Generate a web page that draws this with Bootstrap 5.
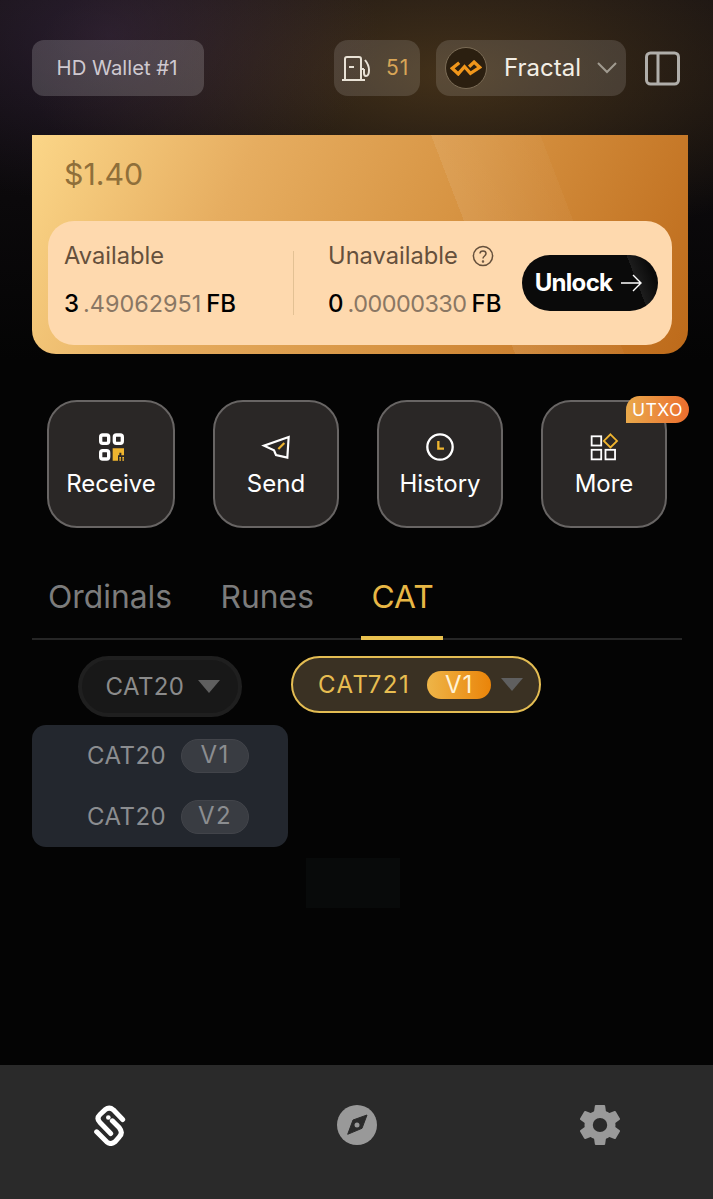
<!doctype html>
<html lang="en">
<head>
<meta charset="utf-8">
<title>Wallet</title>
<link rel="stylesheet" href="https://cdn.jsdelivr.net/npm/bootstrap@5.3.0/dist/css/bootstrap.min.css">
<style>
html,body{height:100%}
body{background:#040404;font-family:Inter,"Liberation Sans",sans-serif;color:#fff;overflow:hidden}
.app-shell{height:1199px;background:
 radial-gradient(ellipse 270px 170px at 110px 35px,rgba(70,48,85,.42),transparent 100%),
 radial-gradient(ellipse 420px 175px at 450px 75px,rgba(100,72,32,.6),transparent 100%),
 linear-gradient(#141012,#0b090b 200px,#040404 360px 100%)}
.top-bar{padding:40px 33px 39px 32px}
.chip{height:56px;border-radius:12px;background:rgba(255,255,255,.13)}
.wallet-chip{width:172px;font-size:20.3px;color:#cfc9d0;background:rgba(255,255,255,.17);padding-right:2px}
.gas-chip{width:86px;border-radius:14px;font-size:21px;letter-spacing:1px;color:#d8a557;gap:16px;padding-left:8px;margin-right:16px}
.net-chip{width:190px;border-radius:14px;padding:0 9px 0 9px;font-size:24px;color:#f3eee5;margin-right:19px}
.net-logo{width:42px;height:42px;border-radius:50%;background:#2b1f10;border:1px solid #7b6c56;margin-right:17px}
.hero{margin:0 25px 0 32px;height:219px;border-radius:0 0 24px 24px;padding:0 16px 9px;background:
 linear-gradient(69deg,transparent 451px,rgba(255,255,255,.08) 451px,rgba(255,255,255,.03) 553px,rgba(255,255,255,0) 553px),
 linear-gradient(115deg,#fbd688 0,#e6ad60 30%,#d79443 60%,#bd6a1a 100%)}
.usd{font-size:30.300px;color:#8f6f3a;padding:21px 0 0 16px;line-height:36px;height:86px}
.balance-box{height:124px;background:#fed9ae;border-radius:26px;padding:0 14px 0 16px;color:#000}
.bal-first{width:229px;margin-bottom:6px}
.bal-second{width:228px;padding-left:34px;flex-shrink:0;margin-bottom:6px}
.bal-rule{width:1px;height:64px;background:#e3c194}
.bal-label{font-size:23.700px;color:#65503c;line-height:28px;margin-bottom:19px;white-space:nowrap}
.bal-val{font-size:24px;line-height:30px;font-weight:500;white-space:nowrap}
.bal-val i{font-style:normal;font-size:23.400px;font-weight:400;color:#8a7764;margin:0 5px 0 4px}
.bal-second .bal-val i{letter-spacing:-.5px}
.bal-val b{font-weight:500;font-size:24px}
.unlock-btn{width:136px;height:56px;border-radius:28px;background:linear-gradient(69deg,#0a0a0a 80%,#1d1d1d 80%,#0a0a0a 92%);color:#fff;font-size:24px;font-weight:700;border:0;padding:0 3px 0 0;letter-spacing:-.7px}
.actions{padding:46px 0 0 47px;gap:38px}
.act-btn{width:126px;height:128px;border-radius:30px;background:#2a2726;border:2px solid #686564;color:#fff;font-size:24px;padding:3px 0 0;line-height:30px;gap:8px;flex-shrink:0}
.act-wide{width:128px}
.utxo-tag{right:-24px;top:-6px;width:63px;height:27px;font-size:17.600px;line-height:27px;letter-spacing:.4px;border-radius:14px 14px 14px 0;background:linear-gradient(90deg,#e9a94b,#ec6e2e);text-align:center;color:#fff}
.tab-row{margin:36px 31px 0 32px;border-bottom:2px solid #262626;height:76px;padding-left:16px;gap:48.500px}
.tab-item{font-size:31.800px;line-height:66px;color:#7c7c7c;height:76px;white-space:nowrap}
.tab-on{color:#e8b745;position:relative;padding:0 9px 0 10px;margin-left:-1px}
.tab-on::after{content:"";position:absolute;left:0;right:0;bottom:0;height:4px;background:#e9c14f}
.filter-row{padding:16px 0 0 78px;height:85px}
.cat-pill{height:61px;width:164px;border-radius:31px;background:#181818;border:4px solid #1f1f1f;color:#8b8b8b;font-size:24px;letter-spacing:.4px;gap:14px;padding-left:6px}
.cat-pill-on{height:57px;width:250px;margin-left:49px;border-radius:29px;background:#3a3123;border:2px solid #e4bd53;color:#e7bd51;font-size:24px;letter-spacing:1.500px;padding-left:25px}
.ver-on{width:64px;height:28px;line-height:28px;margin:0 10px 0 17px;border-radius:14px;background:linear-gradient(90deg,#eeb548,#ea8409);color:#fff3d6;text-align:center;letter-spacing:1px}
.tri{width:0;height:0;border-left:11px solid transparent;border-right:11px solid transparent;border-top:13px solid #5f5f5f}
.cat-menu{margin-left:32px;width:256px;height:122px;border-radius:14px;background:#23272e;padding:0 0 0 55px;color:#8b8d90;font-size:24px;letter-spacing:.45px;justify-content:space-around}
.ver-tag{width:68px;height:34px;line-height:30px;border:1px solid #42444a;border-radius:17px;background:#393c42;text-align:center;margin-left:15px;letter-spacing:1.500px}
.ghost{width:94px;height:50px;margin:11px 0 0 306px;background:#080a0a}
.bottom-bar{height:134px;background:#2a2a2a;padding:0 0 14px 94px}
.nav-mid{margin-left:211px}
.nav-end{margin-left:203px}
</style>
</head>
<body>
<div class="app-shell d-flex flex-column">
  <header class="top-bar d-flex align-items-center">
    <div class="chip wallet-chip d-flex align-items-center justify-content-center">HD Wallet #1</div>
    <div class="chip gas-chip d-flex align-items-center ms-auto">
      <svg width="28" height="25" viewBox="0 0 28 25" fill="none" stroke="#e9e2d6" stroke-width="2"><path d="M3 23V3q0-2 2-2h12q2 0 2 2v20M0 24h23M7 11h5"/><path d="M19 13h3M23 4q4 5 4 10 0 6-3 6-2 0-2-3v-4"/></svg>
      <span>51</span>
    </div>
    <div class="chip net-chip d-flex align-items-center">
      <div class="net-logo d-flex align-items-center justify-content-center">
        <svg width="32" height="16" viewBox="30 50 97 48" fill="none" stroke="#f0961b" stroke-width="10"><path d="M58 58 37 75 55 92 74 70 92 90 120 72 103 56 88 70"/></svg>
      </div>
      <span>Fractal</span>
      <svg class="ms-auto" width="20" height="12" viewBox="0 0 20 12" fill="none" stroke="#a19b90" stroke-width="2"><path d="m1 1 9 9 9-9"/></svg>
    </div>
    <svg width="35" height="35" viewBox="0 0 35 35" fill="none" stroke="#b0aeaa" stroke-width="3"><rect x="1.500" y="2" width="32" height="31" rx="4"/><path d="M13 2v31"/></svg>
  </header>

  <section class="hero">
    <div class="usd">$1.40</div>
    <div class="balance-box d-flex align-items-center">
      <div class="bal-first">
        <div class="bal-label">Available</div>
        <div class="bal-val">3<i>.49062951</i><b>FB</b></div>
      </div>
      <div class="bal-rule"></div>
      <div class="bal-second">
        <div class="bal-label d-flex align-items-center">Unavailable
          <svg class="flex-shrink-0" style="margin-left:14px" width="22" height="22" viewBox="0 0 22 22" fill="none" stroke="#65503c" stroke-width="1.500"><circle cx="11" cy="11" r="9.600"/><path d="M8 8.600C8 5 14 5 14 8.600c0 2.400-3 2.400-3 5"/><circle cx="11" cy="16.500" r=".5"/></svg>
        </div>
        <div class="bal-val">0<i>.00000330</i><b>FB</b></div>
      </div>
      <button class="unlock-btn btn d-flex align-items-center justify-content-center gap-2 flex-shrink-0">Unlock
        <svg width="22" height="18" viewBox="0 0 22 18" fill="none" stroke="#fff" stroke-width="1.400"><path d="M1 9h20M13 1l8 8-8 8"/></svg>
      </button>
    </div>
  </section>

  <nav class="actions d-flex">
    <button class="act-btn act-wide btn d-flex flex-column align-items-center justify-content-center">
      <svg width="25" height="28" viewBox="236 143 75 82"><g fill="none" stroke="#fff" stroke-width="10"><rect x="241" y="148" width="24" height="25" rx="6"/><rect x="282" y="148" width="24" height="25" rx="6"/><rect x="241" y="195" width="24" height="25" rx="6"/></g><path d="M277 188h34v21h-8v-8h-6v8h-4v16h-16z" fill="#efb52f"/><path d="M297 214h5v5h-5zM306 214h5v5h-5zM306 221h5v4h-5zM297 221h5v4h-5z" fill="#efb52f"/></svg>
      <span>Receive</span>
    </button>
    <button class="act-btn btn d-flex flex-column align-items-center justify-content-center">
      <svg width="32" height="28" viewBox="720 142 96 80" fill="none" stroke="#fff" stroke-width="6.500" stroke-linejoin="miter"><path d="M806 152 732 178 762 192 768 206 802 214Z"/><path d="M775 188 793 170" stroke="#efb52f"/></svg>
      <span>Send</span>
    </button>
    <button class="act-btn btn d-flex flex-column align-items-center justify-content-center">
      <svg width="28" height="28" viewBox="198 141 84 84" fill="none"><circle cx="240" cy="183" r="38" stroke="#fff" stroke-width="7"/><path d="M235 165v23h17" stroke="#efb52f" stroke-width="7"/></svg>
      <span>History</span>
    </button>
    <button class="act-btn btn d-flex flex-column align-items-center justify-content-center position-relative">
      <span class="utxo-tag position-absolute">UTXO</span>
      <svg width="29" height="28" viewBox="688 143 88 83" fill="none" stroke="#fff" stroke-width="5.500"><rect x="693" y="152" width="29" height="28"/><rect x="693" y="193" width="29" height="29"/><rect x="735" y="193" width="29" height="29"/><path d="m750 146 20 20-20 20-20-20z" stroke="#efb52f"/></svg>
      <span>More</span>
    </button>
  </nav>

  <div class="tab-row d-flex">
    <div class="tab-item">Ordinals</div>
    <div class="tab-item">Runes</div>
    <div class="tab-item tab-on">CAT</div>
  </div>

  <div class="filter-row d-flex align-items-start">
    <div class="cat-pill d-flex align-items-center justify-content-center">CAT20 <span class="tri"></span></div>
    <div class="cat-pill-on d-flex align-items-center">CAT721<span class="ver-on">V1</span><span class="tri"></span></div>
  </div>

  <div class="cat-menu d-flex flex-column">
    <div class="d-flex align-items-center">CAT20<span class="ver-tag">V1</span></div>
    <div class="d-flex align-items-center">CAT20<span class="ver-tag">V2</span></div>
  </div>

  <div class="ghost"></div>

  <footer class="bottom-bar mt-auto d-flex align-items-center">
    <svg width="32" height="41" viewBox="100 60 96 122" fill="none" stroke="#fff" stroke-width="15" stroke-linecap="round" stroke-linejoin="round"><path d="M186 103 158 74Q146 64 133 74L118 88Q106 100 118 112L150 145"/><path d="M108 140 138 170Q150 180 163 170L176 155Q188 143 176 128L155 107"/><circle cx="143" cy="97" r="7" fill="#fff" stroke="none"/></svg>
    <svg class="nav-mid" width="40" height="40" viewBox="0 0 40 40"><circle cx="20" cy="20" r="20" fill="#999"/><path d="M30 10 25 23.300 10.700 29.300 16 15z" fill="#2a2a2a" stroke="#2a2a2a" stroke-width="1" stroke-linejoin="round"/><circle cx="20" cy="20" r="2.500" fill="#999"/></svg>
    <svg class="nav-end" width="40" height="40" viewBox="2.300 2 19.400 20" preserveAspectRatio="none"><path fill="#999" fill-rule="evenodd" d="M19.430 12.980c.04-.32.07-.64.07-.98s-.03-.66-.07-.98l2.110-1.650a.5.500 0 0 0 .12-.64l-2-3.460a.5.500 0 0 0-.61-.22l-2.490 1a7.300 7.300 0 0 0-1.690-.98l-.38-2.650A.49.490 0 0 0 14 2h-4a.49.490 0 0 0-.49.420l-.38 2.650c-.61.250-1.170.590-1.690.980l-2.490-1a.49.490 0 0 0-.61.220l-2 3.460a.49.490 0 0 0 .12.640l2.110 1.650c-.04.320-.07.650-.07.980s.03.660.07.980l-2.110 1.650a.5.500 0 0 0-.12.640l2 3.460c.12.220.39.300.61.220l2.490-1c.52.400 1.080.730 1.690.980l.38 2.650c.03.240.24.420.49.420h4c.25 0 .46-.18.49-.42l.38-2.650c.61-.25 1.170-.59 1.690-.98l2.490 1c.23.090.49 0 .61-.22l2-3.460a.5.500 0 0 0-.12-.64zM12 15.500a3.500 3.500 0 1 1 0-7 3.500 3.500 0 0 1 0 7z"/></svg>
  </footer>
</div>
<script src="https://cdn.jsdelivr.net/npm/bootstrap@5.3.0/dist/js/bootstrap.bundle.min.js"></script>
</body>
</html>
